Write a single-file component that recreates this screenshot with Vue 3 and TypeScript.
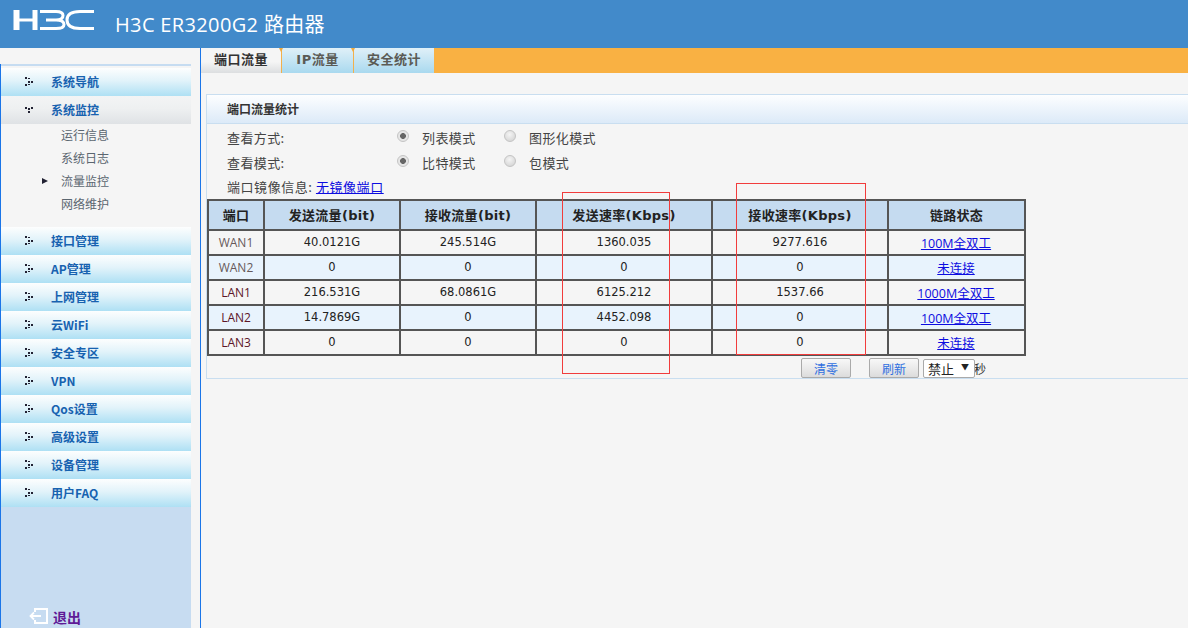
<script setup lang="ts">
const nav = ['接口管理','AP管理','上网管理','云WiFi','安全专区','VPN','Qos设置','高级设置','设备管理','用户FAQ']
const subs = ['运行信息','系统日志','流量监控','网络维护']
const heads = ['端口','发送流量(bit)','接收流量(bit)','发送速率(Kbps)','接收速率(Kbps)','链路状态']
const rows = [
  { port:'WAN1', cls:'wan', v:['40.0121G','245.514G','1360.035','9277.616'], link:'100M全双工' },
  { port:'WAN2', cls:'wan', v:['0','0','0','0'], link:'未连接' },
  { port:'LAN1', cls:'lan', v:['216.531G','68.0861G','6125.212','1537.66'], link:'1000M全双工' },
  { port:'LAN2', cls:'lan', v:['14.7869G','0','4452.098','0'], link:'100M全双工' },
  { port:'LAN3', cls:'lan', v:['0','0','0','0'], link:'未连接' },
]
const widths = [56,136,136,176,176,137]
</script>

<template>
  <div class="page">
    <header class="top">
      <svg class="logo" width="84" height="24" viewBox="0 0 84 24" fill="none" stroke="#fff">
        <path d="M4.5 2V22" stroke-width="6"/>
        <path d="M23 2V22" stroke-width="5"/>
        <path d="M6 12H21" stroke-width="3"/>
        <path d="M28 3.5H44Q51 3.5 51 7.5Q51 12 44 12H34M44 12Q52 12 52 16.5Q52 20.5 44 20.5H28" stroke-width="3"/>
        <path d="M82 3.5H68Q55 3.5 55 12Q55 20.5 68 20.5H82" stroke-width="3"/>
      </svg>
      <span class="product">H3C ER3200G2 路由器</span>
    </header>
    <div class="body">
      <aside class="side">
        <div class="side-top">
          <div class="item">
            <svg class="dots" width="9" height="10" viewBox="0 0 9 10" fill="#223"><path d="M0 0h2v2H0zM3 1h2v1H3zM6 4h2v2H6zM3 4h2v2H3zM0 7h2v2H0zM3 7h2v1H3z"/></svg>系统导航
          </div>
          <div class="item open">
            <svg class="dots" width="9" height="10" viewBox="0 0 9 10" fill="#223"><path d="M0 2h2v2H0zM3 3h2v2H3zM6 2h2v2H6zM3 6h2v2H3z"/></svg>系统监控
          </div>
          <div class="subs">
            <div v-for="(s,i) in subs" :key="s" class="sub"><i v-if="i===2" class="mark"></i>{{ s }}</div>
          </div>
          <div v-for="n in nav" :key="n" class="item">
            <svg class="dots" width="9" height="10" viewBox="0 0 9 10" fill="#223"><path d="M0 0h2v2H0zM3 1h2v1H3zM6 4h2v2H6zM3 4h2v2H3zM0 7h2v2H0zM3 7h2v1H3z"/></svg>{{ n }}
          </div>
        </div>
        <div class="side-fill">
          <div class="exit">
            <svg width="20" height="16" viewBox="0 0 20 16" fill="none" stroke="#fff" stroke-width="2">
              <path d="M6 4V1H18V15H6V12"/>
              <path d="M2 8H12"/>
              <path d="M5 4.5L1.5 8L5 11.5" stroke-width="1.8"/>
            </svg>
            <span>退出</span>
          </div>
        </div>
      </aside>
      <main class="main">
        <nav class="tabs">
          <div class="tab active">端口流量</div>
          <div class="tab t2">IP流量</div>
          <div class="tab t3">安全统计</div>
        </nav>
        <section class="panel">
          <h2 class="ptitle">端口流量统计</h2>
          <div class="opt"><span class="lab">查看方式:</span><span class="radio on"></span><span class="rl">列表模式</span><span class="radio"></span><span>图形化模式</span></div>
          <div class="opt"><span class="lab">查看模式:</span><span class="radio on"></span><span class="rl">比特模式</span><span class="radio"></span><span>包模式</span></div>
          <div class="mirror">端口镜像信息: <a href="#">无镜像端口</a></div>
          <table class="grid">
            <colgroup><col v-for="(w,i) in widths" :key="i" :style="{ width: w + 'px' }" /></colgroup>
            <thead><tr><th v-for="h in heads" :key="h">{{ h }}</th></tr></thead>
            <tbody>
              <tr v-for="(r,i) in rows" :key="r.port" :class="{ alt: i % 2 === 1 }">
                <td class="port" :class="r.cls">{{ r.port }}</td>
                <td v-for="(v,j) in r.v" :key="j">{{ v }}</td>
                <td class="lk"><a href="#">{{ r.link }}</a></td>
              </tr>
            </tbody>
          </table>
          <div class="actions">
            <button class="btn clear">清零</button>
            <button class="btn">刷新</button>
            <span class="sel">禁止<b>▼</b></span>
            <span class="sec">秒</span>
          </div>
          <i class="redbox r1"></i>
          <i class="redbox r2"></i>
        </section>
      </main>
    </div>
  </div>
</template>

<style>
html, body { margin: 0; background: #f5f5f5; overflow: hidden; }
</style>
<style scoped>
.page { width: 1188px; height: 628px; display: flex; flex-direction: column; font: 12px "Noto Sans CJK SC", sans-serif; color: #444; overflow: hidden; }
.top { height: 48px; background: #428aca; display: flex; align-items: flex-start; color: #fff; flex: none; }
.logo { margin: 8px 0 0 12px; }
.product { margin: 11px 0 0 19px; font: 20px/28px "Open Sans", "Noto Sans CJK SC", sans-serif; letter-spacing: .35px; }
.body { flex: 1; display: flex; min-height: 0; }
.side { width: 191px; margin-top: 16px; border-left: 1px solid #1a75e8; box-sizing: border-box; display: flex; flex-direction: column; flex: none; }
.side-top { border-top: 2px solid #c6dcf1; padding-top: 2px; }
.item { height: 28px; display: flex; align-items: center; font: bold 12px/28px "Noto Sans CJK SC", sans-serif; color: #1762b0; background: linear-gradient(#fdfefe, #e2f3fa 45%, #aee0f4); }
.item.open { background: linear-gradient(#f3f4f5, #eef0f1 45%, #dfe2e5); }
.dots { margin: 0 17px 0 24px; flex: none; }
.subs { height: 103px; }
.sub { height: 23px; line-height: 21px; padding-left: 60px; position: relative; color: #5b6670; font-size: 12px; }
.mark { position: absolute; left: 41px; top: 8px; width: 0; height: 0; border-left: 6px solid #223; border-top: 3px solid transparent; border-bottom: 3px solid transparent; }
.side-fill { flex: 1; background: #c7dcf1; position: relative; }
.exit { position: absolute; left: 28px; top: 100px; display: flex; align-items: center; gap: 4px; color: #5f1a96; font-weight: 700; font-size: 14px; line-height: 18px; }
.exit span { position: relative; top: 1px; }
.main { flex: 1; margin-left: 9px; border-left: 1px solid #1a75e8; min-width: 0; position: relative; }
.tabs { height: 25px; background: #f9b143; display: flex; }
.tab { height: 25px; text-align: center; font: bold 13px/24px "DejaVu Sans", "Noto Sans CJK SC", sans-serif; color: #5b5b55; background: linear-gradient(#e0f0f8, #a9d9ef); border-right: 1px solid #f2b04c; box-sizing: border-box; position: relative; letter-spacing: .5px; }
.tab.t2::before, .tab.t3::before { content: ""; position: absolute; left: -3px; top: 0; border-left: 2.5px solid transparent; border-right: 2.5px solid transparent; border-top: 4px solid #f2a93b; }
.active { width: 81px; color: #333; background: linear-gradient(#f5f5f5 55%, #dcdee0); }
.t2 { width: 72px; }
.t3 { width: 80px; border-right: 0; }
.panel { position: relative; margin: 21px 0 0 5px; height: 285px; border: 1px solid #c9def0; border-right: 0; box-sizing: border-box; }
.ptitle { margin: 0; height: 28px; font: bold 12px/27px "Noto Sans CJK SC", sans-serif; color: #333; padding-left: 20px; background: linear-gradient(#fdfeff, #dceaf8); border-bottom: 1px solid #c9def0; }
.opt { display: flex; align-items: center; height: 25px; padding-left: 20px; font-size: 13px; line-height: 25px; letter-spacing: .4px; }
.opt span:not(.radio) { position: relative; top: 1px; }
.lab { width: 170px; }
.rl { width: 82px; }
.radio { width: 12px; height: 12px; margin-right: 13px; border-radius: 50%; background: radial-gradient(circle at 45% 35%, #f4f4f4, #cfcfcf); border: 1px solid #c4c4c4; box-sizing: border-box; position: relative; top: -1px; }
.radio.on { background: radial-gradient(circle, #666 0 2.6px, #e6e6e6 3.2px); }
.mirror { height: 25px; line-height: 26px; padding-left: 20px; font-size: 13px; letter-spacing: .55px; }
a { color: #0c0ce0; }
.grid { border-collapse: collapse; table-layout: fixed; width: 817px; font: 11.5px/1 "DejaVu Sans", "Noto Sans CJK SC", sans-serif; color: #222; }
.grid th, .grid td { border: 2px solid #555; padding: 0; text-align: center; box-sizing: border-box; }
.grid th { height: 30px; background: #c5dbf0; font-weight: bold; font-size: 13px; letter-spacing: .3px; color: #222; }
.grid td { height: 25px; padding-top: 1px; }
.alt td { background: #e8f3fd; }
.port { font-family: "Open Sans", sans-serif; font-size: 12px; }
.wan { color: #66595a; }
.lan { color: #5c1528; }
.grid td.lk { font: 12.5px "Open Sans", "Noto Sans CJK SC", sans-serif; padding: 0 1px 0 0; }
.actions { display: flex; align-items: center; height: 20px; margin: 2px 0 0 594px; }
.btn { width: 50px; height: 20px; padding: 0; border: 1px solid #aaa; border-radius: 2px; background: linear-gradient(#f8f8f8, #dcdcdc); color: #2e6fe0; font: 12px "Noto Sans CJK SC", sans-serif; margin-right: 18px; }
.btn + .btn { margin-right: 4px; }
.sel { width: 52px; height: 19px; background: #fff; border: 1px solid #aaa; border-radius: 2px; box-sizing: border-box; color: #222; font-size: 13px; line-height: 17px; padding-left: 4px; position: relative; }
.sel b { position: absolute; right: 5px; top: -2px; font-size: 8px; }
.sec { color: #333; font-size: 12px; margin-left: -1px; }
.redbox { position: absolute; border: 1px solid #f13c3c; box-sizing: border-box; pointer-events: none; }
.r1 { left: 355px; top: 97px; width: 108px; height: 182px; }
.r2 { left: 529px; top: 88px; width: 130px; height: 172px; }
</style>
